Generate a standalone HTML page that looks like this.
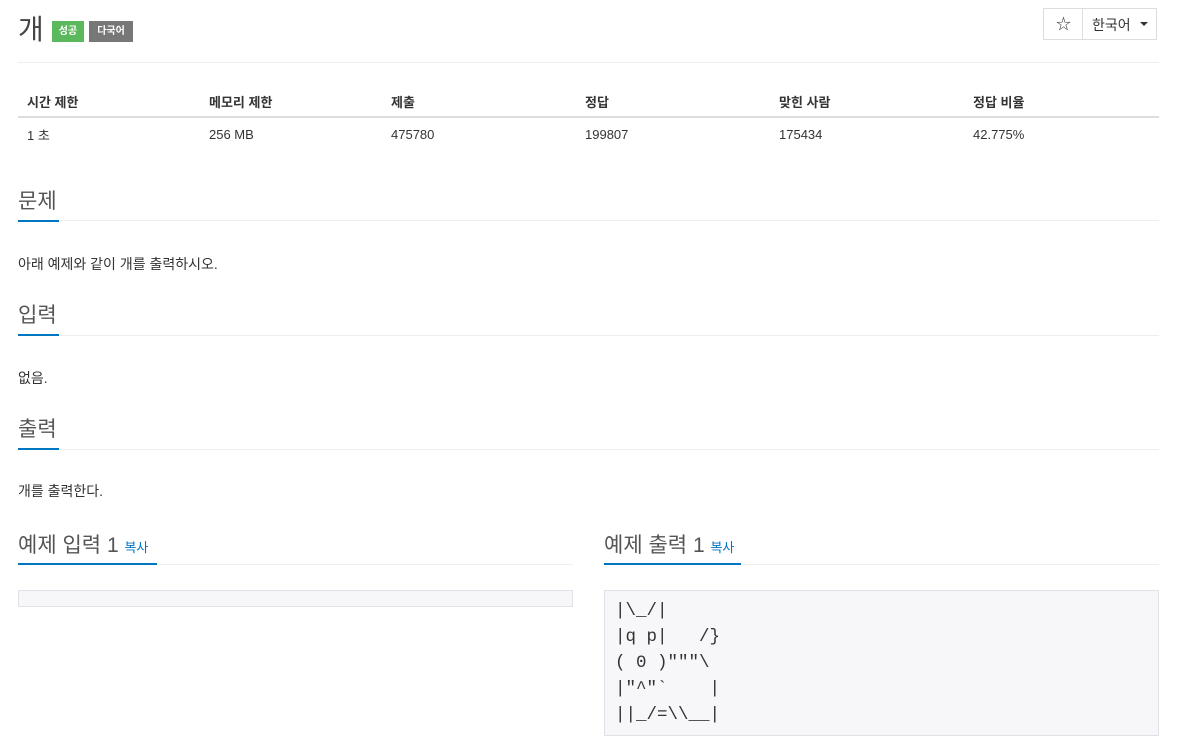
<!DOCTYPE html>
<html><head><meta charset="utf-8"><style>
body{margin:0;width:1183px;height:752px;background:#fff;font-family:"Liberation Sans","Noto Sans CJK KR",sans-serif;color:#333;position:relative;overflow:hidden}
.a{position:absolute;white-space:nowrap}
.h{font-size:21px;color:#555}
.t{font-size:14px;color:#333}
.th{font-size:13px;font-weight:bold;color:#333}
.td{font-size:13px;color:#333}
.line{position:absolute;height:1px;background:#eee}
.blue{position:absolute;height:2px;background:#0076c0}
</style></head><body>
<div class="a" style="left:18px;top:8px;font-size:28px;color:#444">개</div>
<div class="a" style="left:52px;top:21px;width:32px;height:21px;background:#5cb85c;color:#fff;font-size:10px;font-weight:bold;text-align:center;line-height:21px">성공</div>
<div class="a" style="left:89px;top:21px;width:44px;height:21px;background:#777;color:#fff;font-size:10px;font-weight:bold;text-align:center;line-height:21px">다국어</div>
<div class="a" style="left:1043px;top:8px;width:114px;height:32px;border:1px solid #ddd;box-sizing:border-box"></div>
<div class="a" style="left:1082px;top:8px;width:1px;height:32px;background:#ddd"></div>
<div class="a" style="left:1056px;top:13px;font-size:15px">☆</div>
<div class="a" style="left:1092px;top:15px;font-size:14px">한국어</div>
<div class="a" style="left:1140px;top:22px;width:0;height:0;border-left:4px solid transparent;border-right:4px solid transparent;border-top:4px solid #333"></div>
<div class="line" style="left:18px;top:62px;width:1141px"></div>

<div class="a th" style="left:27px;top:92px">시간 제한</div>
<div class="a th" style="left:209px;top:92px">메모리 제한</div>
<div class="a th" style="left:391px;top:92px">제출</div>
<div class="a th" style="left:585px;top:92px">정답</div>
<div class="a th" style="left:779px;top:92px">맞힌 사람</div>
<div class="a th" style="left:973px;top:92px">정답 비율</div>
<div class="a" style="left:18px;top:116px;width:1141px;height:2px;background:#ddd"></div>
<div class="a td" style="left:27px;top:125px">1 초</div>
<div class="a td" style="left:209px;top:127px">256 MB</div>
<div class="a td" style="left:391px;top:127px">475780</div>
<div class="a td" style="left:585px;top:127px">199807</div>
<div class="a td" style="left:779px;top:127px">175434</div>
<div class="a td" style="left:973px;top:127px">42.775%</div>

<div class="a h" style="left:18px;top:185px">문제</div>
<div class="line" style="left:18px;top:220px;width:1141px"></div><div class="blue" style="left:18px;top:220px;width:41px"></div>
<div class="a t" style="left:18px;top:254px">아래 예제와 같이 개를 출력하시오.</div>

<div class="a h" style="left:18px;top:299px">입력</div>
<div class="line" style="left:18px;top:335px;width:1141px"></div><div class="blue" style="left:18px;top:334px;width:41px"></div>
<div class="a t" style="left:18px;top:368px">없음.</div>

<div class="a h" style="left:18px;top:413px">출력</div>
<div class="line" style="left:18px;top:449px;width:1141px"></div><div class="blue" style="left:18px;top:448px;width:41px"></div>
<div class="a t" style="left:18px;top:481px">개를 출력한다.</div>

<div class="a h" style="left:18px;top:529px">예제 입력 1 <span style="font-size:13px;color:#0076c0">복사</span></div>
<div class="line" style="left:18px;top:564px;width:555px"></div><div class="blue" style="left:18px;top:563px;width:139px"></div>
<div class="a" style="left:18px;top:590px;width:555px;height:17px;background:#f7f7f9;border:1px solid #e1e1e8;box-sizing:border-box"></div>

<div class="a h" style="left:604px;top:529px">예제 출력 1 <span style="font-size:13px;color:#0076c0">복사</span></div>
<div class="line" style="left:604px;top:564px;width:555px"></div><div class="blue" style="left:604px;top:563px;width:137px"></div>
<div class="a" style="left:604px;top:590px;width:555px;height:146px;background:#f7f7f9;border:1px solid #e1e1e8;box-sizing:border-box"></div>
<pre class="a" style="left:615px;top:598px;margin:0;white-space:pre;font-family:'Liberation Mono',monospace;font-size:17.5px;line-height:26px;color:#333">|\_/|
|q p|   /}
( 0 )"""\
|"^"`    |
||_/=\\__|</pre>
</body></html>
